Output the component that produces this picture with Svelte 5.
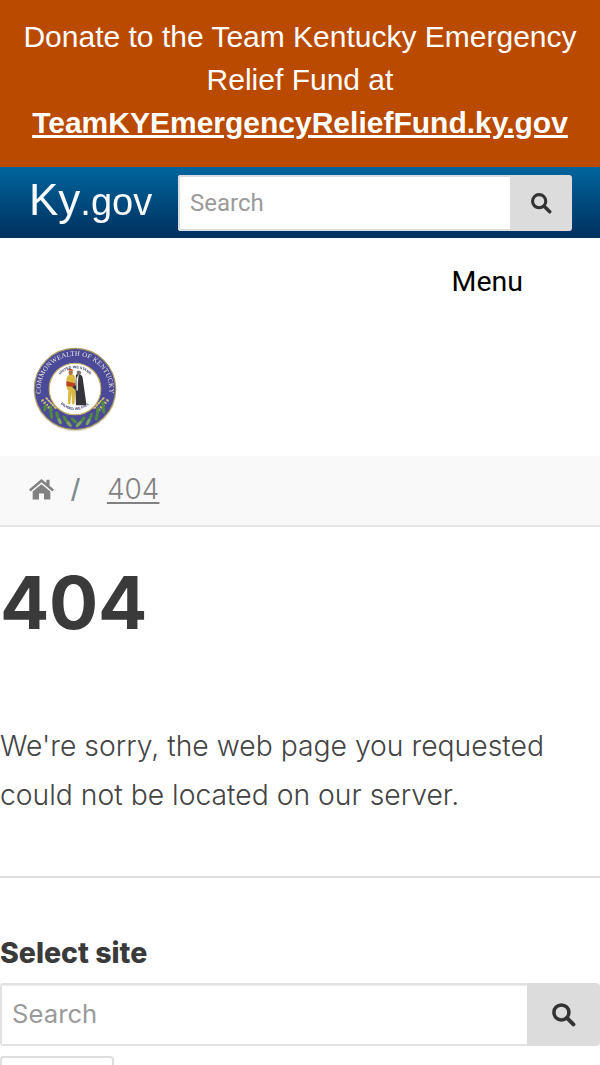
<script>
	const crumbs = '404';

	// laurel leaves along the bottom of the seal
	const leaves = [];
	for (let a = 28; a <= 152; a += 8) {
		const rad = (a * Math.PI) / 180;
		const r = a % 16 === 12 ? 33 : 37;
		leaves.push({
			x: 45 + r * Math.cos(rad),
			y: 45 + r * Math.sin(rad),
			rot: a + (a < 90 ? 50 : -50)
		});
	}

	// wheat grains on both sides of the ring
	const grains = [];
	for (let i = 0; i < 5; i++) {
		grains.push({ x: 11 + i * 2.2, y: 57 + i * 2.4, o: -1 });
		grains.push({ x: 15.5 + i * 2.2, y: 55 + i * 2.4, o: 1 });
	}
</script>

{#snippet searchIcon()}
	<svg class="search-icon" viewBox="0 0 24 24" aria-hidden="true">
		<circle cx="10" cy="10" r="7.2" fill="none" stroke="currentColor" stroke-width="3.4" />
		<path d="M15.5 15.5 21.5 21.5" stroke="currentColor" stroke-width="3.8" stroke-linecap="round" />
	</svg>
{/snippet}

<div class="banner">
	Donate to the Team Kentucky Emergency Relief Fund at
	<a href="#top">TeamKYEmergencyReliefFund.ky.gov</a>
</div>

<header class="topbar">
	<div class="brand"><span class="ky">Ky</span><span class="gov">.gov</span></div>
	<form class="top-search">
		<input type="text" placeholder="Search" />
		<button type="button">{@render searchIcon()}</button>
	</form>
</header>

<nav class="menu-row"><span>Menu</span></nav>

<div class="seal-row">
	<svg class="seal" viewBox="0 0 90 90" aria-label="Seal of the Commonwealth of Kentucky">
		<defs>
			<path id="seal-arc" d="M11 58a36 36 0 1 1 68 0" />
			<path id="seal-top" d="M27 33a21.5 21.5 0 0 1 36 0" />
			<path id="seal-bottom" d="M29 60a22 22 0 0 0 32 0" />
		</defs>
		<circle cx="45" cy="46" r="43.5" fill="#e4e2da" />
		<circle cx="45" cy="45" r="42.5" fill="#4a4a98" stroke="#a89a5c" stroke-width="1.2" />
		<circle cx="45" cy="45" r="27" fill="#fff" stroke="#c9b36a" stroke-width="1.2" />
		<text class="seal-text"><textPath href="#seal-arc" startOffset="50%" text-anchor="middle">COMMONWEALTH OF KENTUCKY</textPath></text>
		<text class="seal-small"><textPath href="#seal-top" startOffset="50%" text-anchor="middle">UNITED WE STAND</textPath></text>
		<text class="seal-small"><textPath href="#seal-bottom" startOffset="50%" text-anchor="middle">DIVIDED WE FALL</textPath></text>
		{#each grains as g}
			<ellipse cx={g.x} cy={g.y} rx="1.7" ry="1.1" fill="#d3bd78" transform="rotate({g.o * 35} {g.x} {g.y})" />
			<ellipse cx={90 - g.x} cy={g.y} rx="1.7" ry="1.1" fill="#d3bd78" transform="rotate({-g.o * 35} {90 - g.x} {g.y})" />
		{/each}
		{#each leaves as l}
			<ellipse cx={l.x} cy={l.y} rx="4" ry="1.7" fill={l.y > 78 ? '#7ca658' : '#4f8a3e'} transform="rotate({l.rot} {l.x} {l.y})" />
		{/each}
		<path d="M39 30c3-1 6 0 6 3l.5 13-1 15h-2.500l-.5-12-1.500 12h-2.500l.5-15-1.500-1-.5-9c0-3 1-5 3-6z" fill="#d9b93f" />
		<path d="M36 37l9 2v4l-9-1z" fill="#b8431f" />
		<circle cx="40.5" cy="28" r="2.3" fill="#a8733f" />
		<path d="M36.5 25.5c2-2 6-2 7 .5z" fill="#b8431f" />
		<path d="M46 30c3-1 6-.5 7 3 1 8 3 20 4 29H46l-.5-16-3.500-3 3.500-2z" fill="#34343a" />
		<path d="M49 29.5c-1 5-1 12-1 17h-1.500v-13z" fill="#f1f1ef" />
		<circle cx="49" cy="28" r="2.3" fill="#77756f" />
	</svg>
</div>

<div class="breadcrumb">
	<svg class="home" viewBox="0 0 26 22" aria-hidden="true">
		<path d="M13 .5 0 11.6l1.600 2L13 4l11.400 9.600 1.600-2-4.600-4V1.500h-3.300v3.300z" />
		<path d="M13 6 3.800 13.700V22h6.600v-6.400h5.200V22h6.600v-8.300z" />
	</svg>
	<span class="sep">/</span>
	<a href="#top">{crumbs}</a>
</div>

<main>
	<h1>404</h1>
	<p>We're sorry, the web page you requested could not be located on our server.</p>
	<hr />
	<label for="site">Select site</label>
	<form class="site-search">
		<input id="site" type="text" placeholder="Search" />
		<button type="button">{@render searchIcon()}</button>
	</form>
	<div class="stub"></div>
</main>

<style>
	:global(body) {
		margin: 0;
		background: #fff;
		overflow: hidden;
		font-family: Inter, "Noto Sans", sans-serif;
		color: #373a3c;
	}

	.banner {
		height: 167px;
		box-sizing: border-box;
		padding: 15px 20px 0;
		background: #b94a00;
		color: #fff;
		font-family: "Liberation Sans", sans-serif;
		font-size: 30px;
		line-height: 43px;
		text-align: center;
	}

	.banner a {
		display: block;
		color: #fff;
		font-weight: 700;
		text-decoration: underline;
		white-space: nowrap;
	}

	.topbar {
		height: 71px;
		box-sizing: border-box;
		display: flex;
		align-items: center;
		gap: 26px;
		padding: 0 28px 0 29px;
		background: linear-gradient(#00659d, #00305f);
	}

	.brand {
		width: 123px;
		padding-bottom: 5px;
		color: #fff;
		font-family: "Liberation Sans", sans-serif;
		white-space: nowrap;
		line-height: 1;
		opacity: 0.97;
	}

	.ky {
		font-size: 44px;
	}

	.gov {
		font-size: 38px;
	}

	.top-search {
		flex: 1;
		display: flex;
		height: 56px;
		border-radius: 3px;
		overflow: hidden;
	}

	.top-search input {
		flex: 1;
		min-width: 0;
		box-sizing: border-box;
		border: 2px solid #d8dde2;
		border-right: 0;
		padding: 0 10px;
		font-family: Roboto, sans-serif;
		font-size: 24px;
		outline: 0;
	}

	input::placeholder {
		color: #9a9a9a;
		opacity: 1;
	}

	button {
		border: 0;
		padding: 0;
		background: #dcdcdc;
		color: #333;
		display: flex;
		align-items: center;
		justify-content: center;
	}

	.top-search button {
		width: 62px;
	}

	.top-search .search-icon {
		width: 22px;
		height: 22px;
	}

	.menu-row {
		height: 87px;
		box-sizing: border-box;
		padding: 27px 77px 0 0;
		text-align: right;
		font-family: Roboto, sans-serif;
		font-size: 28.5px;
		line-height: 34px;
		color: #000;
	}

	.seal-row {
		height: 131px;
		box-sizing: border-box;
		padding: 21px 0 0 32px;
	}

	.seal {
		display: block;
		width: 86px;
		height: 86px;
		filter: blur(0.4px);
	}

	.seal-text {
		font-family: "Liberation Serif", serif;
		font-size: 7.2px;
		fill: #eeeae0;
		letter-spacing: 0.2px;
	}

	.seal-small {
		font-family: "Liberation Sans", sans-serif;
		font-size: 3.8px;
		font-weight: 700;
		fill: #33336b;
	}

	.breadcrumb {
		height: 71px;
		box-sizing: border-box;
		display: flex;
		align-items: center;
		padding: 0 0 4px 29px;
		background: #f9f9f9;
		border-bottom: 2px solid #e4e4e4;
		color: #818a91;
		font-size: 28px;
		font-weight: 300;
	}

	.home {
		width: 25px;
		height: 22px;
		fill: #818181;
	}

	.sep {
		margin: 3px 27px 0 17px;
		font-family: "Liberation Sans", sans-serif;
		font-size: 32px;
	}

	.breadcrumb a {
		color: #818181;
		text-decoration: underline;
		text-decoration-thickness: 2px;
		text-underline-offset: 3px;
	}

	h1 {
		margin: 0;
		padding-top: 32px;
		font-family: Inter, sans-serif;
		font-size: 73px;
		font-weight: 700;
		letter-spacing: -0.3px;
		line-height: 88px;
		color: #3a3a3a;
	}

	p {
		margin: 0;
		padding-top: 75px;
		font-size: 28.3px;
		font-weight: 300;
		line-height: 49px;
		color: #444;
	}

	hr {
		margin: 56px 0 0;
		border: 0;
		border-top: 2px solid #dedede;
	}

	label {
		display: block;
		margin-top: 57px;
		font-size: 28.5px;
		font-weight: 800;
		line-height: 36px;
		color: #3a3a3a;
	}

	.site-search {
		display: flex;
		height: 63px;
		margin-top: 12px;
		border-radius: 4px;
		overflow: hidden;
	}

	.site-search input {
		flex: 1;
		min-width: 0;
		box-sizing: border-box;
		border: 2px solid #e2e2e2;
		border-right: 0;
		padding: 0 10px 3px;
		font-family: Inter, sans-serif;
		font-size: 25.7px;
		font-weight: 400;
		outline: 0;
		box-shadow: inset 0 1px 1px rgba(0, 0, 0, 0.075);
	}

	.site-search button {
		width: 73px;
	}

	.site-search .search-icon {
		width: 25px;
		height: 25px;
	}

	.stub {
		width: 114px;
		height: 30px;
		margin-top: 10px;
		box-sizing: border-box;
		border: 2px solid #dedede;
		border-radius: 4px;
	}
</style>
